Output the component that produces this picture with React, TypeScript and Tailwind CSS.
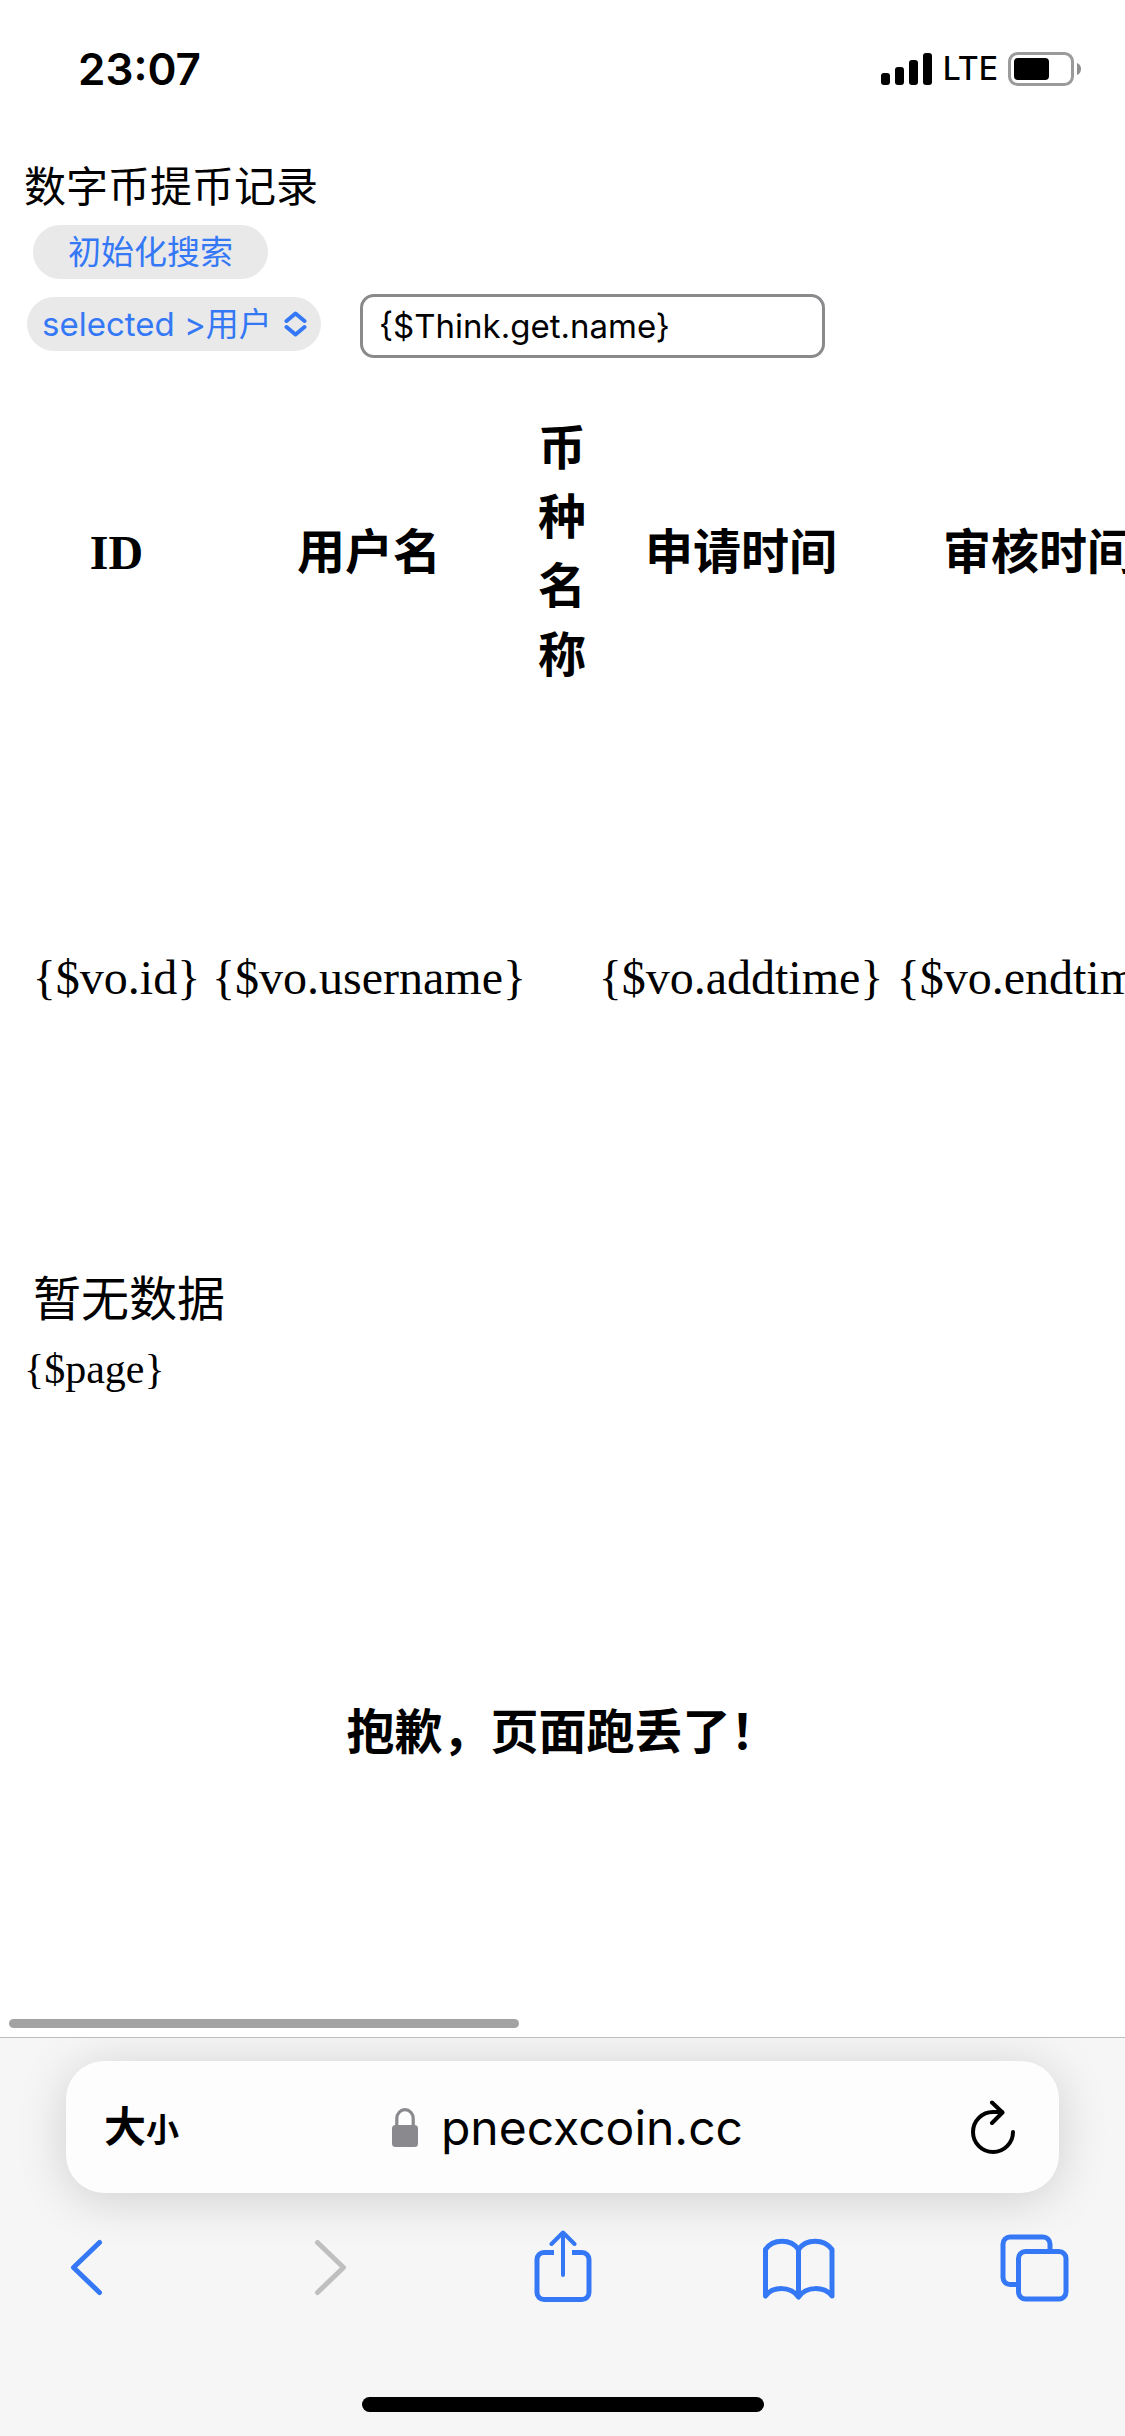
import React from "react";

const UI = "font-['Inter','Noto_Sans_CJK_SC',sans-serif]";
const SERIF = "font-['Liberation_Serif','Noto_Sans_CJK_SC',serif]";

const columns = [
  { head: "ID", value: "{$vo.id}" },
  { head: "用户名", value: "{$vo.username}" },
  { head: "币种名称", value: "" },
  { head: "申请时间", value: "{$vo.addtime}" },
  { head: "审核时间", value: "{$vo.endtime}" },
];

function StatusBar() {
  return (
    <header className={`${UI} flex h-[138px] items-center justify-between pl-[78px] pr-[42px]`}>
      <time className="text-[44px] leading-none font-semibold">23:07</time>
      <div className="flex items-center gap-[10px]">
        <svg className="h-[34px] w-[52px]" viewBox="0 0 52 34" aria-label="Signal">
          <rect x="0" y="21" width="9" height="12" rx="3" />
          <rect x="14" y="15" width="9" height="18" rx="3" />
          <rect x="28" y="8" width="9" height="25" rx="3" />
          <rect x="42" y="1" width="9" height="32" rx="3" />
        </svg>
        <span className="text-[32px] leading-none font-medium">LTE</span>
        <svg className="h-[34px] w-[75px]" viewBox="0 0 75 34" aria-label="Battery">
          <rect x="1.5" y="1.5" width="63" height="31" rx="8" fill="none" stroke="#9b9b9b" strokeWidth="3" />
          <rect x="6" y="6" width="35" height="22" rx="4" />
          <path d="M69 11c3 1 4 3.500 4 6s-1 5-4 6z" fill="#8e8e8e" />
        </svg>
      </div>
    </header>
  );
}

function SearchForm() {
  return (
    <form className={UI} onSubmit={(e) => e.preventDefault()}>
      <button type="button" className="ml-[33px] block h-[54px] w-[235px] rounded-full bg-[#e9e9ea] text-[33px] leading-none text-[#3478f6]">
        初始化搜索
      </button>
      <div className="mt-[15px] flex items-start pl-[27px]">
        <div className="relative mt-[3px]">
          <select aria-label="搜索字段" className="h-[54px] w-[294px] appearance-none rounded-full bg-[#e9e9ea] pl-[15px] text-[33px] leading-none text-[#3478f6]">
            <option>selected &gt;用户</option>
          </select>
          <svg className="pointer-events-none absolute top-[14px] right-[14px] h-[26px] w-[23px]" viewBox="0 0 23 26" fill="none" stroke="#3478f6" strokeWidth="4" strokeLinecap="round" strokeLinejoin="round">
            <path d="M2.500 10 11.500 2.500 20.500 10M2.500 16l9 7.500 9-7.500" />
          </svg>
        </div>
        <input aria-label="关键词" defaultValue="{$Think.get.name}" className="ml-[39px] h-16 w-[465px] rounded-[14px] border-3 border-[#8a8a8d] bg-white pl-4 text-[33px] text-black" />
      </div>
    </form>
  );
}

function RecordTable() {
  return (
    <div className="mt-14 overflow-x-hidden pl-[27px]">
      <table className="w-[1161px] table-fixed border-collapse text-center text-[48px] leading-[69px]">
        <colgroup>
          <col className="w-[179px]" />
          <col className="w-[326px]" />
          <col className="w-[60px]" />
          <col className="w-[298px]" />
          <col className="w-[298px]" />
        </colgroup>
        <thead>
          <tr>
            {columns.map((c) => (
              <th key={c.head} scope="col" className="px-[6px] font-bold">{c.head}</th>
            ))}
          </tr>
        </thead>
        <tbody>
          <tr>
            {columns.map((c) => (
              <td key={c.head} className="py-[253px] whitespace-nowrap">{c.value}</td>
            ))}
          </tr>
          <tr>
            <td colSpan={5} className="pl-[6px] text-left">暂无数据</td>
          </tr>
        </tbody>
      </table>
    </div>
  );
}

function BrowserBar() {
  const icon = "h-[72px] w-[72px] fill-none stroke-[#3478f6] stroke-[5px]";
  return (
    <footer className={`${UI} overflow-hidden border-t border-[#bcbcbc] bg-[#f6f6f7] pb-6`}>
      <div className="mx-[66px] mt-[23px] grid h-[132px] grid-cols-[1fr_auto_1fr] items-center rounded-[38px] bg-[#fdfdfd] pr-[44px] pl-[38px] shadow-[0_6px_50px_rgba(0,0,0,0.16)]">
        <button type="button" aria-label="大小" className="flex items-baseline justify-self-start leading-none font-bold">
          <span className="text-[42px]">大</span>
          <span className="text-[33px]">小</span>
        </button>
        <a href="https://pnecxcoin.cc" className="flex items-center gap-[22px] pt-px pl-4">
          <svg className="h-10 w-[27px]" viewBox="0 0 27 40">
            <rect x="0" y="17" width="26" height="22" rx="3.500" fill="#8a8a8e" />
            <path d="M4.800 19v-8.500a8.200 8.800 0 0 1 16.400 0V19" fill="none" stroke="#8a8a8e" strokeWidth="3.200" />
          </svg>
          <span className="text-[48px] leading-[60px]">pnecxcoin.cc</span>
        </a>
        <button type="button" aria-label="Reload" className="justify-self-end">
          <svg className="h-[54px] w-[44px]" viewBox="0 0 44 54" fill="none" stroke="#000" strokeWidth="4" strokeLinecap="round" strokeLinejoin="round">
            <path d="M42 32A20 20 0 1 1 22 12h9" />
            <path d="M21 2.500 31.500 12.500 21 23" />
          </svg>
        </button>
      </div>
      <nav className="mt-[37px] flex justify-between px-[53px]">
        <button type="button" aria-label="Back">
          <svg className={icon} viewBox="0 0 72 72" strokeLinecap="round" strokeLinejoin="round">
            <path d="M46.500 12.500 20.500 37.500l26 25" />
          </svg>
        </button>
        <button type="button" aria-label="Forward" disabled>
          <svg className="h-[72px] w-[72px] fill-none stroke-[#bfbfbf] stroke-[5px]" viewBox="0 0 72 72" strokeLinecap="round" strokeLinejoin="round">
            <path d="M27.500 12.500 53.500 37.500l-26 25" />
          </svg>
        </button>
        <button type="button" aria-label="Share">
          <svg className={icon} viewBox="0 0 72 72" strokeLinejoin="round">
            <path d="M27 22.500H17a7 7 0 0 0-7 7V62.500a7 7 0 0 0 7 7h38a7 7 0 0 0 7-7V29.500a7 7 0 0 0-7-7H45" />
            <path d="M24.500 14 36 2.500l11.500 11.500M36 3v42" strokeLinecap="round" strokeWidth="4" />
          </svg>
        </button>
        <button type="button" aria-label="Bookmarks">
          <svg className={icon} viewBox="0 0 72 72" strokeLinejoin="round">
            <path d="M2.500 19.500C10 8.500 28 8.500 35.500 19.500 43 8.500 61 8.500 69 19.500V66C61 56 43 56 35.500 67 28 56 10 56 2.500 66ZM35.500 19.500V67" />
          </svg>
        </button>
        <button type="button" aria-label="Tabs">
          <svg className={icon} viewBox="0 0 72 72">
            <path d="M18 54.500h-8a7 7 0 0 1-7-7V14a7 7 0 0 1 7-7h33a7 7 0 0 1 7 7v7" />
            <rect x="18.500" y="21.500" width="47.500" height="47.500" rx="7" />
          </svg>
        </button>
      </nav>
      <div className="mx-auto mt-[95px] h-[15px] w-[402px] rounded-full bg-black" />
    </footer>
  );
}

export default function App() {
  return (
    <div lang="zh-CN" className={`${SERIF} flex min-h-screen flex-col bg-white text-black`}>
      <StatusBar />
      <main className="flex flex-1 flex-col">
        <h1 className="mt-5 mb-[7px] pl-6 text-[42px] leading-[60px] font-normal">数字币提币记录</h1>
        <SearchForm />
        <RecordTable />
        <p className="pl-6 text-[42px] leading-[70px]">{"{$page}"}</p>
        <h2 className="mt-[294px] text-center text-[48px] leading-[69px] font-bold">抱歉，页面跑丢了！</h2>
        <div className="mt-auto mb-[9px] ml-[9px] h-[9px] w-[510px] rounded-full bg-[#a3a3a3]" />
      </main>
      <BrowserBar />
    </div>
  );
}
